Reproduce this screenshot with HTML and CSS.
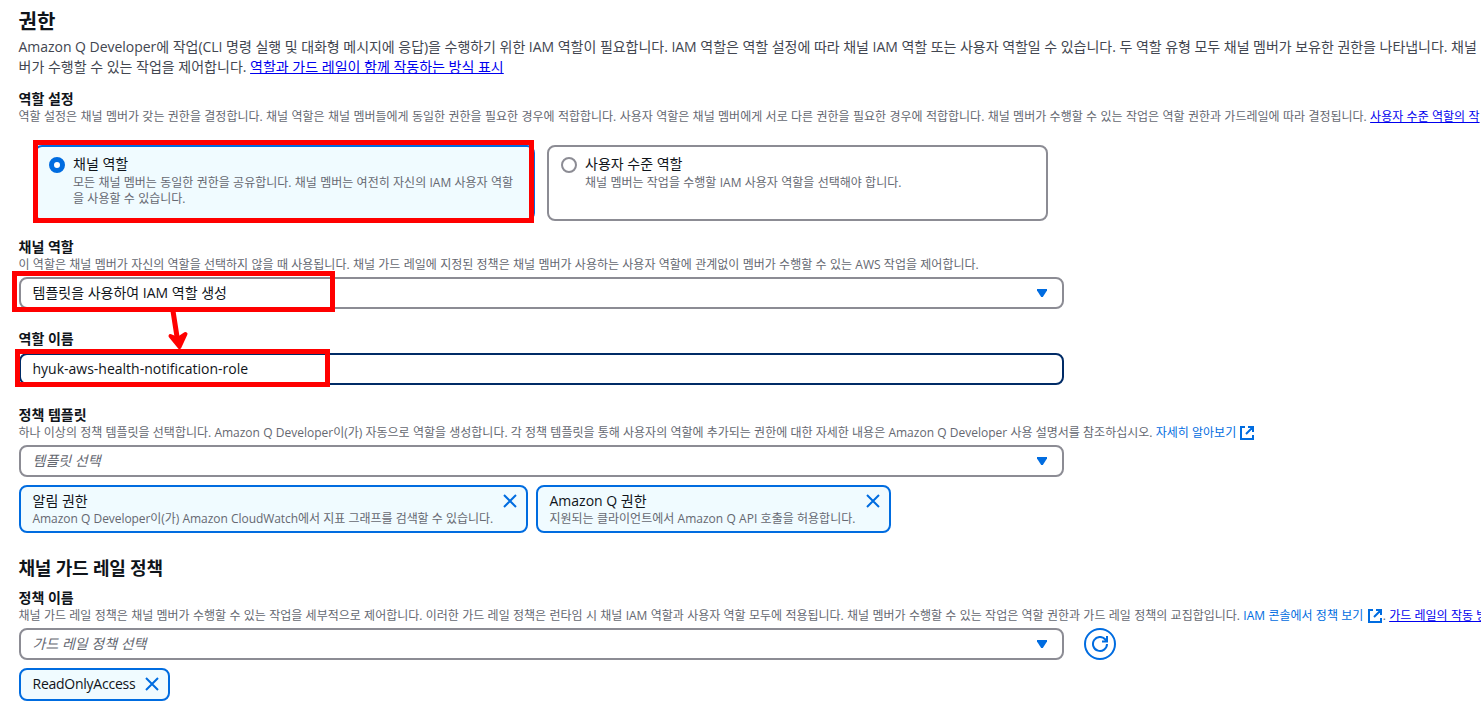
FILE: index.html
```html
<!DOCTYPE html>
<html lang="ko">
<head>
    <meta charset="UTF-8">
    <meta name="viewport" content="width=device-width, initial-scale=1.0">
    <title>권한</title>
    <link rel="stylesheet" href="styles.css">
</head>
<body>
    <div class="container">
        <div class="header">
            <h1>권한</h1>
            <p><span class="intro-first">Amazon Q Developer에 작업(CLI 명령 실행 및 대화형 메시지에 응답)을 수행하기 위한 IAM 역할이 필요합니다. IAM 역할은 역할 설정에 따라 채널 IAM 역할 또는 사용자 역할일 수 있습니다. 두 역할 유형 모두 채널 멤버가 보유한 권한을 나타냅니다. 채널</span><br>
            버가 수행할 수 있는 작업을 제어합니다. <a href="#">역할과 가드 레일이 함께 작동하는 방식 표시</a></p>
        </div>

        <!-- Role settings -->
        <div class="field settings">
            <label>역할 설정</label>
            <div class="description settings-text">역할 설정은 채널 멤버가 갖는 권한을 결정합니다. 채널 역할은 채널 멤버들에게 동일한 권한을 필요한 경우에 적합합니다. 사용자 역할은 채널 멤버에게 서로 다른 권한을 필요한 경우에 적합합니다. 채널 멤버가 수행할 수 있는 작업은 역할 권한과 가드레일에 따라 결정됩니다. <a href="#">사용자 수준 역할의 작</a></div>
            <div class="tiles">
                <div class="tile selected">
                    <span class="radio"></span>
                    <div class="tile-content">
                        <div class="tile-title">채널 역할</div>
                        <div class="description">모든 채널 멤버는 동일한 권한을 공유합니다. 채널 멤버는 여전히 자신의 IAM 사용자 역할<br>을 사용할 수 있습니다.</div>
                    </div>
                    <div class="mark mark-tile"></div>
                </div>
                <div class="tile">
                    <span class="radio"></span>
                    <div class="tile-content">
                        <div class="tile-title">사용자 수준 역할</div>
                        <div class="description">채널 멤버는 작업을 수행할 IAM 사용자 역할을 선택해야 합니다.</div>
                    </div>
                </div>
            </div>
        </div>

        <!-- Channel role -->
        <div class="field channel-role">
            <label>채널 역할</label>
            <div class="description">이 역할은 채널 멤버가 자신의 역할을 선택하지 않을 때 사용됩니다. 채널 가드 레일에 지정된 정책은 채널 멤버가 사용하는 사용자 역할에 관계없이 멤버가 수행할 수 있는 AWS 작업을 제어합니다.</div>
            <div class="control">
                <span>템플릿을 사용하여 IAM 역할 생성</span>
                <svg class="caret" viewBox="0 0 10 9"><path d="M0 0h10v1.5L5.8 8H4.2L0 1.5z"/></svg>
                <div class="mark mark-select"></div>
                <svg class="arrow" viewBox="0 0 24 42"><path d="M6 1L10.500 30"/><path class="arrow-head" d="M3.500 26l9 11 6-13-7.500 5z"/></svg>
            </div>
        </div>

        <!-- Role name -->
        <div class="field role-name">
            <label>역할 이름</label>
            <div class="control focused">
                <span>hyuk-aws-health-notification-role</span>
                <div class="mark mark-name"></div>
            </div>
        </div>

        <!-- Policy templates -->
        <div class="field templates">
            <label>정책 템플릿</label>
            <div class="description templates-text">하나 이상의 정책 템플릿을 선택합니다. Amazon Q Developer이(가) 자동으로 역할을 생성합니다. 각 정책 템플릿을 통해 사용자의 역할에 추가되는 권한에 대한 자세한 내용은 Amazon Q Developer 사용 설명서를 참조하십시오. <span class="external">자세히 알아보기 <svg viewBox="0 0 16 16"><path d="M6 2H2v12h12v-4M9 2h5v5M7 9l7-7"/></svg></span></div>
            <div class="control">
                <span class="placeholder">템플릿 선택</span>
                <svg class="caret" viewBox="0 0 10 9"><path d="M0 0h10v1.5L5.8 8H4.2L0 1.5z"/></svg>
            </div>
            <div class="tokens">
                <div class="token token-alert">
                    <div>
                        <div>알림 권한</div>
                        <div class="description">Amazon Q Developer이(가) Amazon CloudWatch에서 지표 그래프를 검색할 수 있습니다.</div>
                    </div>
                    <svg class="close" viewBox="0 0 16 16"><path d="M2 2l12 12M14 2L2 14"/></svg>
                </div>
                <div class="token token-q">
                    <div>
                        <div>Amazon Q 권한</div>
                        <div class="description">지원되는 클라이언트에서 Amazon Q API 호출을 허용합니다.</div>
                    </div>
                    <svg class="close" viewBox="0 0 16 16"><path d="M2 2l12 12M14 2L2 14"/></svg>
                </div>
            </div>
        </div>

        <!-- Guardrail policies -->
        <h2>채널 가드 레일 정책</h2>
        <div class="field">
            <label>정책 이름</label>
            <div class="description guardrail-text">채널 가드 레일 정책은 채널 멤버가 수행할 수 있는 작업을 세부적으로 제어합니다. 이러한 가드 레일 정책은 런타임 시 채널 IAM 역할과 사용자 역할 모두에 적용됩니다. 채널 멤버가 수행할 수 있는 작업은 역할 권한과 가드 레일 정책의 교집합입니다. <span class="external">IAM 콘솔에서 정책 보기 <svg viewBox="0 0 16 16"><path d="M6 2H2v12h12v-4M9 2h5v5M7 9l7-7"/></svg></span>. <a href="#">가드 레일의 작동 방</a></div>
            <div class="control-row">
                <div class="control">
                    <span class="placeholder">가드 레일 정책 선택</span>
                    <svg class="caret" viewBox="0 0 10 9"><path d="M0 0h10v1.5L5.8 8H4.2L0 1.5z"/></svg>
                </div>
                <button class="refresh">
                    <svg viewBox="0 0 16 16"><path d="M15 8a7 7 0 1 1-1.6-4.5L15 5.5M15 0v5.5H10"/></svg>
                </button>
            </div>
            <div class="tokens">
                <div class="token token-small">
                    <span>ReadOnlyAccess</span>
                    <svg class="close" viewBox="0 0 16 16"><path d="M2 2l12 12M14 2L2 14"/></svg>
                </div>
            </div>
        </div>
    </div>
</body>
</html>
```

FILE: styles.css
```css
* {
    margin: 0;
    padding: 0;
    box-sizing: border-box;
}

body {
    background: #fff;
    color: #0f141a;
    font-family: "Open Sans", "Noto Sans CJK KR", sans-serif;
    font-size: 14px;
    line-height: 20px;
    white-space: nowrap;
    overflow: hidden;
}

.container {
    padding: 10px 0 0 18.5px;
}

a {
    color: #0000ee;
}

svg {
    fill: none;
    stroke: #006ce0;
    stroke-width: 2;
    flex-shrink: 0;
}

/* Header */
.header {
    margin-bottom: 12px;
}

.header h1 {
    font-size: 20px;
    line-height: 24px;
    margin-bottom: 3px;
}

.header p {
    color: #424650;
}

.intro-first {
    letter-spacing: -0.03px;
}

h2 {
    font-size: 18px;
    line-height: 22px;
    margin-bottom: 9px;
    letter-spacing: -0.2px;
}

/* Fields */
.field label {
    display: block;
    font-weight: 700;
}

.description {
    color: #656871;
    font-size: 12px;
    line-height: 16px;
    word-spacing: 0.2px;
}

.settings-text {
    word-spacing: 0.25px;
}

.templates-text {
    word-spacing: 0.1px;
}

.settings {
    margin-bottom: 16px;
}

.channel-role,
.role-name {
    margin-bottom: 20px;
}

.templates {
    margin-bottom: 24px;
}

.external {
    color: #006ce0;
}

.external svg {
    width: 16px;
    height: 16px;
    vertical-align: -4px;
}

/* Tiles */
.tiles {
    display: flex;
    gap: 12px;
    margin: 20px 0 0 15.5px;
}

.tile {
    position: relative;
    display: flex;
    gap: 8px;
    width: 501px;
    height: 76px;
    padding: 8px 12px;
    border: 2px solid #8c8c94;
    border-radius: 8px;
}

.tile.selected {
    background: #f0fbff;
    border-color: #006ce0;
}

.tile-title {
    margin-top: -1px;
    margin-bottom: 1px;
}

.radio {
    width: 16px;
    height: 16px;
    margin-top: 2px;
    border: 2px solid #8c8c94;
    border-radius: 50%;
}

.selected .radio {
    margin-left: 1px;
    background: #fff;
    border: 5px solid #006ce0;
}

/* Inputs and selects */
.control {
    position: relative;
    display: flex;
    align-items: center;
    justify-content: space-between;
    width: 1045px;
    height: 32px;
    margin-top: 4px;
    padding: 0 15px 0 12px;
    border: 2px solid #8c8c94;
    border-radius: 8px;
}

.control.focused {
    border-color: #002b66;
}

.placeholder {
    color: #656871;
    font-style: italic;
}

.caret {
    width: 10px;
    height: 9px;
    fill: #006ce0;
    stroke: none;
}

.control-row {
    display: flex;
    align-items: flex-end;
    gap: 20px;
}

.refresh {
    display: flex;
    align-items: center;
    justify-content: center;
    width: 32px;
    height: 32px;
    background: #fff;
    border: 2px solid #006ce0;
    border-radius: 50%;
}

.refresh svg {
    width: 16px;
    height: 16px;
}

/* Tokens */
.tokens {
    display: flex;
    gap: 8px;
    margin-top: 8px;
}

.token {
    display: flex;
    justify-content: space-between;
    height: 48px;
    padding: 4px 8px 4px 12px;
    background: #f0fbff;
    border: 2px solid #006ce0;
    border-radius: 8px;
}

.token-alert {
    width: 509px;
}

.token-alert .description {
    letter-spacing: -0.06px;
}

.token-q {
    width: 355px;
}

.token-small {
    align-items: center;
    width: 151px;
    height: 33px;
    padding: 3px 8px 4px 12px;
    letter-spacing: -0.25px;
}

.close {
    width: 16px;
    height: 16px;
    margin-top: 2px;
}

.token-small .close {
    margin-top: 0;
}

/* Red highlights */
.mark {
    position: absolute;
    border: 5px solid #ff0000;
}

.mark-tile {
    top: -7px;
    left: -3px;
    width: 501px;
    height: 83px;
}

.mark-select {
    top: -8px;
    left: -9px;
    width: 323px;
    height: 41px;
}

.mark-name {
    top: -6px;
    left: -6px;
    width: 315px;
    height: 38px;
}

.arrow {
    position: absolute;
    z-index: 1;
    top: 31px;
    left: 146px;
    width: 24px;
    height: 42px;
    stroke: #ff0000;
    stroke-width: 5;
    stroke-linecap: round;
    stroke-linejoin: round;
}

.arrow-head {
    fill: #ff0000;
    stroke-width: 4;
}
```
